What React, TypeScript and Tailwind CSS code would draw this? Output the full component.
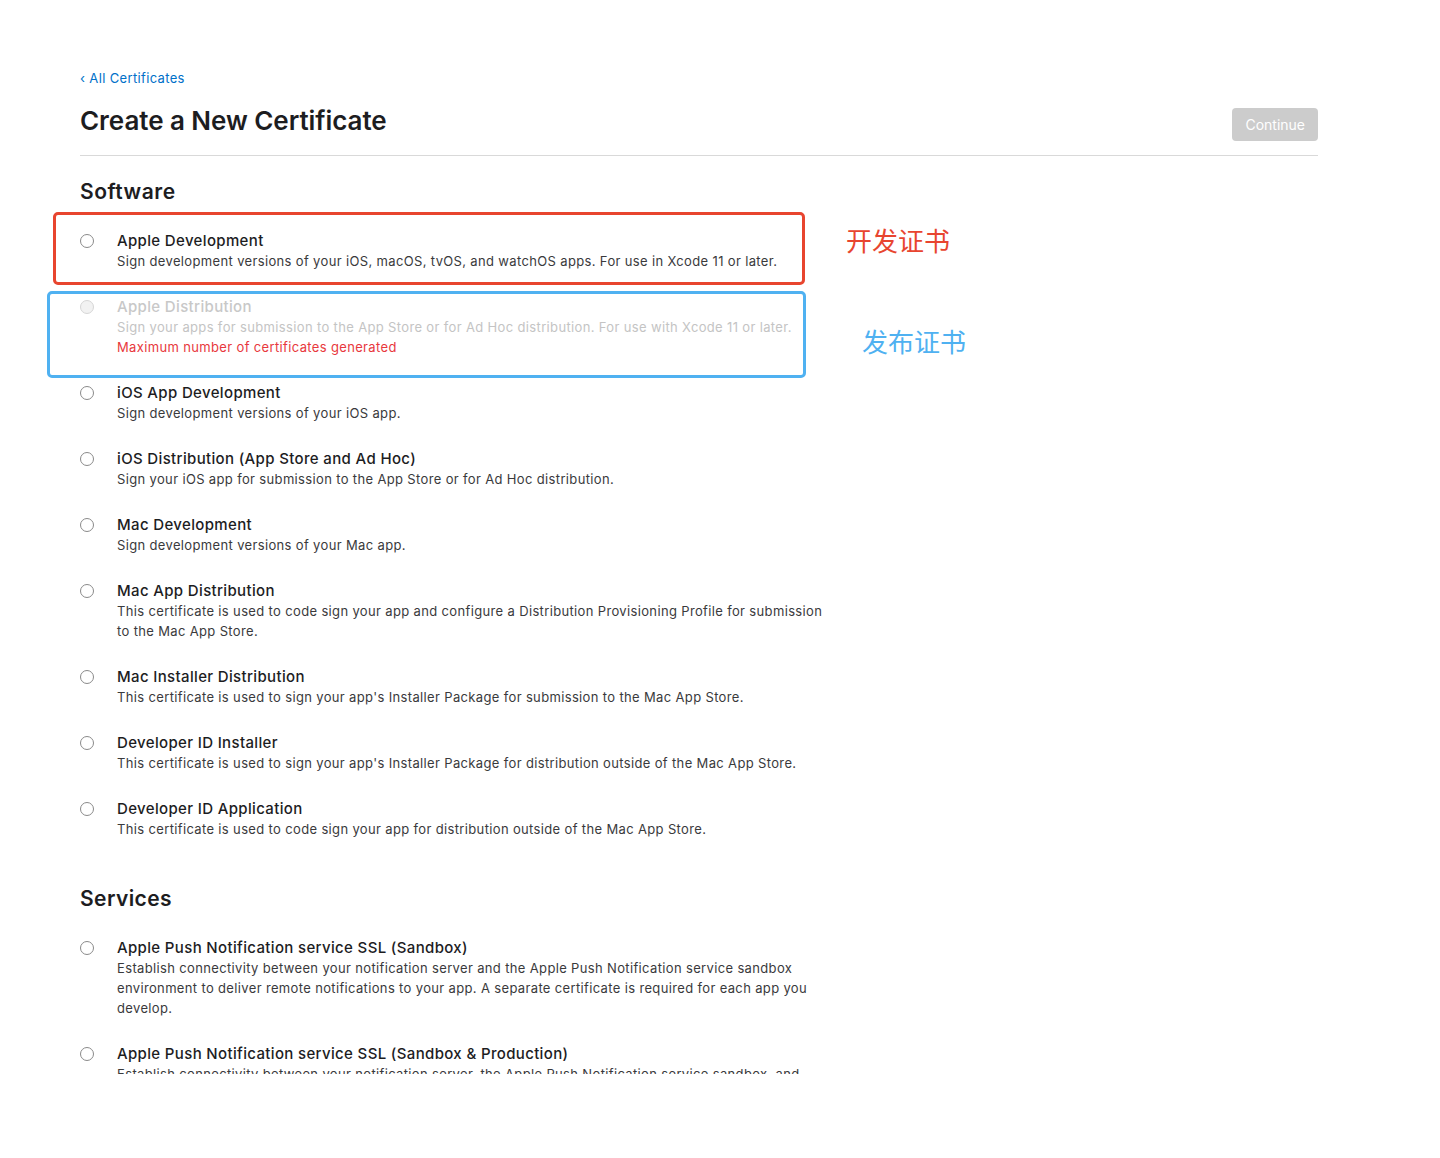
const software = [
  {
    title: "Apple Development",
    desc: ["Sign development versions of your iOS, macOS, tvOS, and watchOS apps. For use in Xcode 11 or later."],
  },
  {
    title: "Apple Distribution",
    desc: ["Sign your apps for submission to the App Store or for Ad Hoc distribution. For use with Xcode 11 or later."],
    disabled: true,
    error: "Maximum number of certificates generated",
  },
  { title: "iOS App Development", desc: ["Sign development versions of your iOS app."] },
  {
    title: "iOS Distribution (App Store and Ad Hoc)",
    desc: ["Sign your iOS app for submission to the App Store or for Ad Hoc distribution."],
  },
  { title: "Mac Development", desc: ["Sign development versions of your Mac app."] },
  {
    title: "Mac App Distribution",
    desc: [
      "This certificate is used to code sign your app and configure a Distribution Provisioning Profile for submission",
      "to the Mac App Store.",
    ],
  },
  {
    title: "Mac Installer Distribution",
    desc: ["This certificate is used to sign your app's Installer Package for submission to the Mac App Store."],
  },
  {
    title: "Developer ID Installer",
    desc: ["This certificate is used to sign your app's Installer Package for distribution outside of the Mac App Store."],
  },
  {
    title: "Developer ID Application",
    desc: ["This certificate is used to code sign your app for distribution outside of the Mac App Store."],
  },
]

const services = [
  {
    title: "Apple Push Notification service SSL (Sandbox)",
    desc: [
      "Establish connectivity between your notification server and the Apple Push Notification service sandbox",
      "environment to deliver remote notifications to your app. A separate certificate is required for each app you",
      "develop.",
    ],
  },
  {
    title: "Apple Push Notification service SSL (Sandbox & Production)",
    desc: [
      "Establish connectivity between your notification server, the Apple Push Notification service sandbox, and",
      "production environment to deliver remote notifications to your app.",
    ],
  },
]

type Item = { title: string; desc: string[]; disabled?: boolean; error?: string }

function Option({ item }: { item: Item }) {
  const off = item.disabled
  return (
    <div className="flex gap-[23px]">
      <div
        className={
          "mt-[3px] h-[14px] w-[14px] shrink-0 rounded-full border " +
          (off ? "border-[#d6d6d6] bg-[#f2f2f2]" : "border-[#8a8a8a] bg-white")
        }
      />
      <div className="tracking-[0.35px]">
        <div
          className={
            "text-[15px] leading-[20px] font-medium " + (off ? "text-[#c8c8c8]" : "text-[#1d1d1f]")
          }
        >
          {item.title}
        </div>
        {item.desc.map((d) => (
          <div
            key={d}
            className={"text-[13px] leading-[20px] whitespace-nowrap " + (off ? "text-[#c4c4c4]" : "text-[#3a3a3c]")}
          >
            {d}
          </div>
        ))}
        {item.error && <div className="text-[13px] leading-[20px] text-[#e8383d]">{item.error}</div>}
      </div>
    </div>
  )
}

export default function App() {
  return (
    <div
      className="relative h-[1158px] w-full bg-white"
      style={{ fontFamily: "Inter, 'Noto Sans CJK SC', sans-serif" }}
    >
      <div className="h-[1074px] overflow-hidden">
        <div className="w-[1238px] ml-[80px] pt-[70px]">
          <a className="block text-[13px] leading-[16px] tracking-[0.35px] text-[#0070c9]">‹ All Certificates</a>
          <div className="mt-[19px] flex items-start justify-between border-b border-[#d9d9d9] pb-[14px]">
            <h1 className="text-[26px] leading-[32px] font-semibold tracking-[-0.05px] text-[#1d1d1f]">
              Create a New Certificate
            </h1>
            <button className="mt-[3px] h-[33px] rounded-[4px] bg-[#cccccc] px-[13px] text-[14px] text-white">
              Continue
            </button>
          </div>

          <h2 className="mt-[23px] text-[21px] leading-[26px] font-semibold tracking-[0.5px] text-[#1d1d1f]">
            Software
          </h2>
          <div className="mt-[26px] flex flex-col gap-[26px]">
            {software.map((it) => (
              <Option key={it.title} item={it} />
            ))}
          </div>

          <h2 className="mt-[47px] text-[21px] leading-[26px] font-semibold tracking-[0.4px] text-[#1d1d1f]">
            Services
          </h2>
          <div className="mt-[26px] flex flex-col gap-[26px]">
            {services.map((it) => (
              <Option key={it.title} item={it} />
            ))}
          </div>
        </div>
      </div>

      {/* annotations */}
      <div className="absolute left-[53px] top-[212px] h-[73px] w-[752px] rounded-[5px] border-[3px] border-[#e8452f]" />
      <div className="absolute left-[47px] top-[291px] h-[87px] w-[759px] rounded-[5px] border-[3px] border-[#4fb1f1]" />
      <div className="absolute left-[846px] top-[226px] text-[26px] leading-[32px] text-[#e8452f]">开发证书</div>
      <div className="absolute left-[862px] top-[327px] text-[26px] leading-[32px] text-[#4fb1f1]">发布证书</div>
    </div>
  )
}
